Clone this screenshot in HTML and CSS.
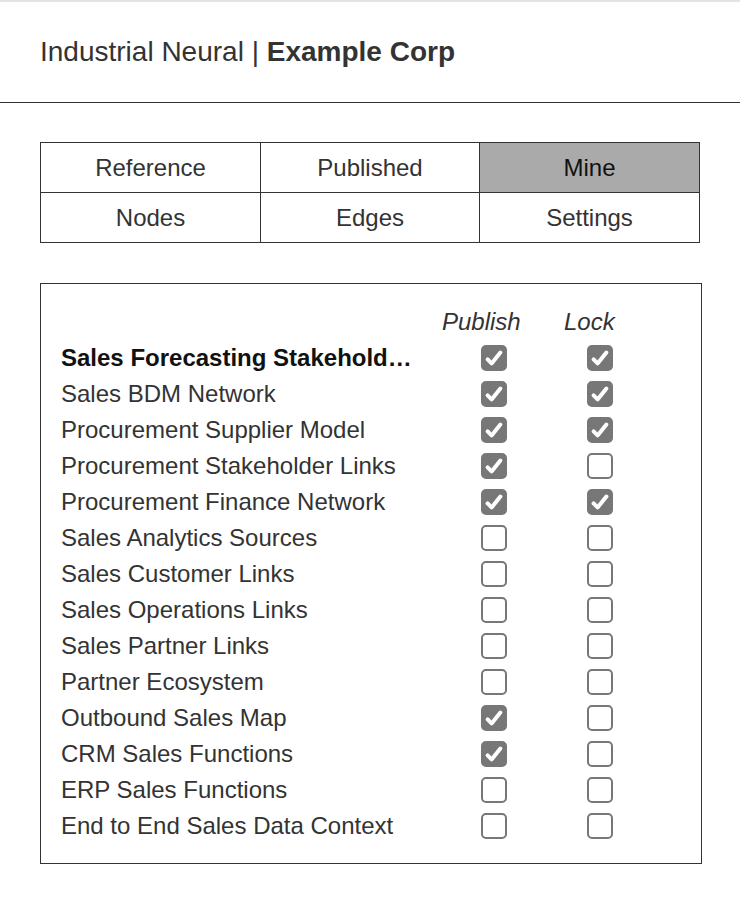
FILE: index.html
```html
<!DOCTYPE html>
<html>
<head>
<meta charset="utf-8">
<link rel="stylesheet" href="styles.css">
</head>
<body>
<div class="topband"></div>
<header class="header">
  <h1 class="title">Industrial Neural | <b>Example Corp</b></h1>
</header>
<main class="main">
  <div class="tabs">
    <div class="tab">Reference</div>
    <div class="tab">Published</div>
    <div class="tab active">Mine</div>
    <div class="tab">Nodes</div>
    <div class="tab">Edges</div>
    <div class="tab">Settings</div>
  </div>

  <section class="panel">
    <div class="grid">
      <div class="name"></div>
      <div class="cell pub"><span class="colhead">Publish</span></div>
      <div class="cell lock"><span class="colhead">Lock</span></div>

      <div class="name bold">Sales Forecasting Stakeholders Overview</div>
      <div class="cell pub"><span class="cb on"><svg viewBox="0 0 26 26"><path d="M6.6 14.4 L10.6 18.4 L19.4 7.6"/></svg></span></div>
      <div class="cell lock"><span class="cb on"><svg viewBox="0 0 26 26"><path d="M6.6 14.4 L10.6 18.4 L19.4 7.6"/></svg></span></div>

      <div class="name">Sales BDM Network</div>
      <div class="cell pub"><span class="cb on"><svg viewBox="0 0 26 26"><path d="M6.6 14.4 L10.6 18.4 L19.4 7.6"/></svg></span></div>
      <div class="cell lock"><span class="cb on"><svg viewBox="0 0 26 26"><path d="M6.6 14.4 L10.6 18.4 L19.4 7.6"/></svg></span></div>

      <div class="name">Procurement Supplier Model</div>
      <div class="cell pub"><span class="cb on"><svg viewBox="0 0 26 26"><path d="M6.6 14.4 L10.6 18.4 L19.4 7.6"/></svg></span></div>
      <div class="cell lock"><span class="cb on"><svg viewBox="0 0 26 26"><path d="M6.6 14.4 L10.6 18.4 L19.4 7.6"/></svg></span></div>

      <div class="name">Procurement Stakeholder Links</div>
      <div class="cell pub"><span class="cb on"><svg viewBox="0 0 26 26"><path d="M6.6 14.4 L10.6 18.4 L19.4 7.6"/></svg></span></div>
      <div class="cell lock"><span class="cb"></span></div>

      <div class="name">Procurement Finance Network</div>
      <div class="cell pub"><span class="cb on"><svg viewBox="0 0 26 26"><path d="M6.6 14.4 L10.6 18.4 L19.4 7.6"/></svg></span></div>
      <div class="cell lock"><span class="cb on"><svg viewBox="0 0 26 26"><path d="M6.6 14.4 L10.6 18.4 L19.4 7.6"/></svg></span></div>

      <div class="name">Sales Analytics Sources</div>
      <div class="cell pub"><span class="cb"></span></div>
      <div class="cell lock"><span class="cb"></span></div>

      <div class="name">Sales Customer Links</div>
      <div class="cell pub"><span class="cb"></span></div>
      <div class="cell lock"><span class="cb"></span></div>

      <div class="name">Sales Operations Links</div>
      <div class="cell pub"><span class="cb"></span></div>
      <div class="cell lock"><span class="cb"></span></div>

      <div class="name">Sales Partner Links</div>
      <div class="cell pub"><span class="cb"></span></div>
      <div class="cell lock"><span class="cb"></span></div>

      <div class="name">Partner Ecosystem</div>
      <div class="cell pub"><span class="cb"></span></div>
      <div class="cell lock"><span class="cb"></span></div>

      <div class="name">Outbound Sales Map</div>
      <div class="cell pub"><span class="cb on"><svg viewBox="0 0 26 26"><path d="M6.6 14.4 L10.6 18.4 L19.4 7.6"/></svg></span></div>
      <div class="cell lock"><span class="cb"></span></div>

      <div class="name">CRM Sales Functions</div>
      <div class="cell pub"><span class="cb on"><svg viewBox="0 0 26 26"><path d="M6.6 14.4 L10.6 18.4 L19.4 7.6"/></svg></span></div>
      <div class="cell lock"><span class="cb"></span></div>

      <div class="name">ERP Sales Functions</div>
      <div class="cell pub"><span class="cb"></span></div>
      <div class="cell lock"><span class="cb"></span></div>

      <div class="name">End to End Sales Data Context</div>
      <div class="cell pub"><span class="cb"></span></div>
      <div class="cell lock"><span class="cb"></span></div>
    </div>
  </section>
</main>
</body>
</html>
```
FILE: styles.css
```css
* { box-sizing: border-box; }
html, body { margin: 0; padding: 0; background: #fff; }
body {
  font-family: "Liberation Sans", Arial, sans-serif;
  color: #333;
  width: 740px;
}
.topband { height: 2px; background: #e2e2e8; }
.header {
  height: 101px;
  border-bottom: 1px solid #333;
  padding: 0 40px;
  display: flex;
  align-items: center;
}
.title {
  margin: 0;
  font-size: 28px;
  font-weight: normal;
  color: #333;
}
.title b { font-weight: bold; }
.main { padding: 39px 38px 0 40px; }
.tabs {
  width: 660px;
  display: grid;
  grid-template-columns: 220px 219px 220px;
  border-top: 1px solid #333;
  border-left: 1px solid #333;
}
.tab {
  height: 50px;
  border-right: 1px solid #333;
  border-bottom: 1px solid #333;
  display: flex;
  align-items: center;
  justify-content: center;
  font-size: 24px;
  color: #333;
}
.tab.active { background: #aaa; color: #111; }
.panel {
  margin-top: 40px;
  width: 662px;
  border: 1px solid #333;
  padding: 20px 20px 19px 20px;
}
.grid {
  display: grid;
  grid-template-columns: 352px 128px 1fr;
  grid-auto-rows: 36px;
}
.name {
  font-size: 24px;
  line-height: 36px;
  white-space: nowrap;
  overflow: hidden;
  text-overflow: ellipsis;
  color: #333;
}
.name.bold { font-weight: bold; color: #111; }
.cell { display: flex; align-items: center; }
.colhead { font-size: 24px; font-style: italic; color: #333; }
.pub .colhead { margin-left: 29px; }
.lock .colhead { margin-left: 23px; }
.pub .cb { margin-left: 68px; }
.lock .cb { margin-left: 46px; }
.cb {
  width: 26px;
  height: 26px;
  border: 2px solid #777;
  border-radius: 5px;
  background: #fff;
  display: block;
  position: relative;
}
.cb.on { background: #777; }
.cb svg {
  position: absolute;
  left: -2px;
  top: -2px;
  width: 26px;
  height: 26px;
  fill: none;
  stroke: #fff;
  stroke-width: 4;
  stroke-linecap: round;
  stroke-linejoin: round;
}
```
